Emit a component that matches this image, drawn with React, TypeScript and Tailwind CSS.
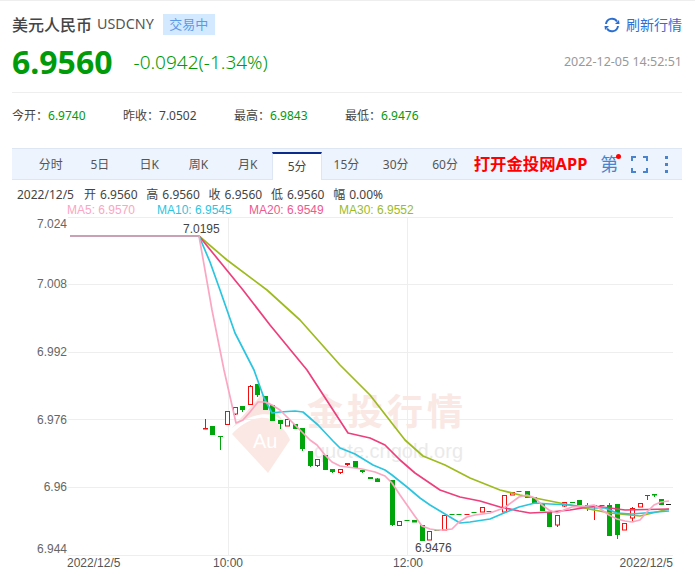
import React from "react";

const GREEN = "#00a50b";
const RED = "#f01010";

type C = [number, number, number, number, number, "r" | "g" | "rf" | "gd" | "rd"];
// x, bodyTop, bodyBottom, wickTop, wickBottom, kind
const candles: C[] = [
  [205.5, 428, 429.5, 419, 429, "rf"],
  [212.5, 426, 435, 426, 435, "g"],
  [220.5, 436, 437, 436, 450, "g"],
  [227.5, 411.5, 424.5, 411, 425, "r"],
  [235.5, 407.5, 414, 407, 415, "r"],
  [242.5, 406, 410, 406, 412, "g"],
  [250.5, 386, 404, 385, 405, "r"],
  [257.5, 384, 395, 384, 397, "g"],
  [265.5, 396, 410, 396, 410, "g"],
  [272.5, 405, 421, 405, 421, "g"],
  [280.5, 420, 424, 420, 429, "g"],
  [287.5, 419.5, 426, 419, 426, "r"],
  [295.5, 424, 429, 424, 429, "g"],
  [302.5, 428, 449, 428, 451, "g"],
  [310.5, 451, 466, 451, 467, "g"],
  [317.5, 459.5, 465.5, 459, 467, "r"],
  [325.5, 455, 470, 455, 470, "g"],
  [332.5, 469, 472, 469, 473, "g"],
  [340.5, 469.5, 472.5, 469, 474, "r"],
  [347.5, 463, 465, 463, 466, "rf"],
  [355, 461, 468, 461, 468, "g"],
  [362.5, 470, 472, 470, 473, "g"],
  [370, 477, 479, 477, 479, "g"],
  [377.5, 478.5, 482, 478, 482, "g"],
  [392, 480, 525, 480, 526, "g"],
  [399.5, 521.5, 525.5, 521, 525, "r"],
  [407, 520.5, 521, 520, 521, "gd"],
  [414.5, 520, 522.5, 520, 522, "g"],
  [422, 525, 541, 525, 541, "g"],
  [429.5, 531.5, 540, 531, 540, "r"],
  [437, 530, 530, 530, 530, "gd"],
  [444.5, 515.5, 530, 515, 530, "r"],
  [452, 514, 514, 514, 514, "gd"],
  [459, 514, 514, 514, 514, "gd"],
  [467, 514, 514, 514, 514, "rd"],
  [474, 512, 512, 512, 512, "gd"],
  [482, 507.5, 512, 507, 512, "r"],
  [489, 511, 511, 511, 511, "gd"],
  [504, 495.5, 512, 495, 512, "r"],
  [512, 492.5, 495, 492, 495, "r"],
  [519, 491, 491, 491, 491, "gd"],
  [527, 491, 498, 491, 498, "g"],
  [534.5, 497, 503, 497, 503, "g"],
  [542, 503.5, 511, 503, 511, "g"],
  [549, 512, 527, 512, 527, "g"],
  [557, 515.5, 525, 515, 527, "r"],
  [564.5, 502.5, 506, 502, 507, "r"],
  [572, 502, 503, 502, 503, "g"],
  [579, 500, 505, 500, 505, "g"],
  [587, 505, 506, 503, 511, "g"],
  [594.5, 505, 506, 505, 520, "rf"],
  [602, 505, 505, 505, 505, "gd"],
  [609.5, 505, 536, 503, 536, "g"],
  [617, 504, 535, 504, 539, "g"],
  [624.5, 523.5, 530, 523, 530, "r"],
  [632, 508.5, 518, 507, 521, "r"],
  [640, 503.5, 507, 503, 507, "r"],
  [647, 495, 496, 495, 500, "rf"],
  [654.5, 494, 495.5, 494, 497, "g"],
  [661.5, 499, 505, 499, 505, "g"],
];

const ma5 = "199,236 212,310 224,370 236,423 243,420 250,412 258,402 265,402 272,405 280,410 287,417 295,425 302,432 310,440 317,445 325,455 332,462 340,466 347,467 355,468 362,469 375,472 385,476 392,483 400,495 407,505 414,515 422,526 430,529 437,530 444,530 452,529 459,522 467,517 475,515 490,513 504,508 519,497 527,495 535,498 542,505 549,510 557,513 564,510 572,507 587,506 594,505 602,510 609,515 617,519 625,521 632,522 640,520 647,512 654,505 661,502 669,501";
const ma10 = "199,236 210,262 220,290 235,333 254,370 264,398 272,413 280,412 295,411 303,412 318,425 333,441 340,448 355,454 373,465 385,470 392,475 407,487 420,498 430,505 440,511 460,523 470,522 490,519 504,513 519,507 535,503 550,504 570,505 594,508 605,508 617,513 632,514 669,511";
const ma20 = "199,236 243,290 270,325 307,370 348,433 370,438 385,445 400,460 415,473 440,490 460,497 480,501 500,507 519,511 530,513 550,512 570,510 594,506 610,508 625,510 669,509";
const ma30 = "199,236 227,260 267,290 300,320 340,365 370,395 405,440 423,456 445,465 470,478 500,490 520,495 540,499 570,505 594,510 610,513 640,516 669,509";

function Chart() {
  return (
    <svg width="695" height="353" viewBox="0 217 695 353" className="block" fontFamily="'Liberation Sans', Arial, sans-serif" fontSize="12">
      {/* grid */}
      {[217.5, 284.5, 352.5, 419.5, 487.5, 555.5].map((y) => (
        <line key={y} x1="68" x2="673" y1={y} y2={y} stroke="#eeeeee" />
      ))}
      <line x1="228.5" x2="228.5" y1="217" y2="555" stroke="#eeeeee" />
      <line x1="407.5" x2="407.5" y1="217" y2="555" stroke="#eeeeee" />

      {/* watermark */}
      <g>
        <path d="M232 434 C245 420 262 414 272 420 C282 426 288 434 290 440 L268 473 Z" fill="#fbe8e4" />
        <path d="M232 428 L263 393 L288 428 C280 414 262 406 232 428 Z" fill="#fae4df" />
        <text x="253" y="448" fontSize="20" fill="#ffffff">Au</text>
        <text x="307" y="425" fontSize="36" letterSpacing="4" fontWeight="700" fill="#f9e8e4" fontFamily="'Noto Sans CJK SC', sans-serif">金投行情</text>
        <text x="314" y="458" fontSize="20" fill="#eaeaea">quote.cngold.org</text>
      </g>

      {/* flat */}
      <line x1="70" x2="199" y1="236" y2="236" stroke="#c9a0b4" strokeWidth="2" />

      {/* candles */}
      {candles.map(([x, t, b, wt, wb, k], i) => {
        const isRed = k === "r" || k === "rf" || k === "rd";
        const col = isRed ? RED : GREEN;
        if (k === "gd" || k === "rd") {
          return <line key={i} x1={x - 2.5} x2={x + 2.5} y1={Math.floor(t) + 0.5} y2={Math.floor(t) + 0.5} stroke={col} />;
        }
        return (
          <g key={i}>
            <line x1={Math.floor(x) + 0.5} x2={Math.floor(x) + 0.5} y1={wt} y2={wb} stroke={col} />
            {k === "r" ? (
              <rect x={Math.floor(x) - 2 + 0.5} y={Math.floor(t) + 0.5} width="4" height={Math.max(b - t, 1)} fill="#ffffff" stroke={col} />
            ) : (
              <rect x={Math.floor(x) - 2} y={t} width="5" height={Math.max(b - t, 1)} fill={col} />
            )}
          </g>
        );
      })}

      {/* MAs */}
      <polyline points={ma30} fill="none" stroke="#9dbb1f" strokeWidth="1.7" strokeLinejoin="round" />
      <polyline points={ma20} fill="none" stroke="#ee3f7d" strokeWidth="1.7" strokeLinejoin="round" />
      <polyline points={ma10} fill="none" stroke="#2cc5df" strokeWidth="1.7" strokeLinejoin="round" />
      <polyline points={ma5} fill="none" stroke="#fba6c2" strokeWidth="1.7" strokeLinejoin="round" />

      <line x1="666" x2="671" y1="504.5" y2="504.5" stroke="#222" />

      {/* axis labels */}
      <g fill="#666666" textAnchor="end">
        <text x="67" y="228">7.024</text>
        <text x="67" y="288">7.008</text>
        <text x="67" y="356">6.992</text>
        <text x="67" y="424">6.976</text>
        <text x="67" y="491">6.96</text>
        <text x="67" y="553">6.944</text>
      </g>
      <g fill="#444444">
        <text x="183" y="233">7.0195</text>
        <text x="415" y="552">6.9476</text>
      </g>
      <g fill="#555555">
        <text x="67" y="567">2022/12/5</text>
        <text x="228" y="567" textAnchor="middle">10:00</text>
        <text x="408" y="567" textAnchor="middle">12:00</text>
        <text x="673" y="567" textAnchor="end">2022/12/5</text>
      </g>
    </svg>
  );
}

const tabs = ["分时", "5日", "日K", "周K", "月K", "5分", "15分", "30分", "60分"];
const ohlc = [
  ["开", "6.9560"],
  ["高", "6.9560"],
  ["收", "6.9560"],
  ["低", "6.9560"],
  ["幅", "0.00%"],
];

export default function App() {
  return (
    <div className="w-[695px] h-[570px] overflow-hidden bg-white border-t border-[#eeeeee] font-['Noto_Sans','Noto_Sans_CJK_SC',sans-serif] text-[#333333]">
      <div className="mx-3 w-[670px]">
        {/* Title row */}
        <div className="flex items-center h-[21px] mt-[13px]">
          <span className="text-base font-medium text-[#444444] leading-none">美元人民币</span>
          <span className="ml-[5px] text-[14.3px] text-[#555555] leading-none">USDCNY</span>
          <span className="ml-[9px] w-[52px] h-[21px] flex items-center justify-center bg-[#d3e9ff] text-[13px] text-[#5a9be8] leading-none">交易中</span>
          <span className="ml-auto flex items-center gap-[6px] text-sm text-[#2f6fd6] leading-none">
            <svg width="16" height="16" viewBox="0 0 16 16" fill="none">
              <path d="M2 7 A6 6 0 0 1 13 4.5" stroke="#2a6fd0" strokeWidth="2" />
              <path d="M14 9 A6 6 0 0 1 3 11.5" stroke="#2a6fd0" strokeWidth="2" />
              <path d="M15.5 7 L11 7 L15 3 Z" fill="#2a6fd0" />
              <path d="M0.5 9 L5 9 L1 13 Z" fill="#2a6fd0" />
            </svg>
            刷新行情
          </span>
        </div>
        {/* Price row */}
        <div className="flex items-center h-[44px] mt-[5px]">
          <span className="text-[32px] font-bold text-[#009a0a] leading-none">6.9560</span>
          <span className="ml-[21px] text-[19px] font-light text-[#009a0a] leading-none">-0.0942(-1.34%)</span>
          <span className="ml-auto text-[12.5px] text-[#999999] leading-none">2022-12-05 14:52:51</span>
        </div>
        <div className="h-px bg-[#eeeeee] mt-[8px]" />
        {/* stats */}
        <div className="flex items-center h-[45px] text-xs text-[#444444]">
          {[
            ["今开：", "6.9740", "text-[#009a0a]"],
            ["昨收：", "7.0502", "text-[#444444]"],
            ["最高：", "6.9843", "text-[#009a0a]"],
            ["最低：", "6.9476", "text-[#009a0a]"],
          ].map(([l, v, c]) => (
            <div key={l} className="w-[111px] whitespace-nowrap">
              {l}
              <span className={c}>{v}</span>
            </div>
          ))}
        </div>
      </div>

      {/* tabs */}
      <div className="ml-3 w-[670px] h-[32px] mt-[10px] bg-[#edf4fd] border-y border-[#dde6f3] flex items-end pl-[14px] relative">
        {tabs.map((t, i) => (
          <div
            key={t}
            className={
              i === 5
                ? "w-[49.3px] h-[28px] -mb-px flex items-center justify-center bg-white border-t-2 border-x border-t-[#0c2c8c] border-x-[#dde6f3] text-xs text-[#444444] leading-none"
                : "w-[49.3px] h-[28px] flex items-center justify-center text-xs text-[#555555] leading-none"
            }
          >
            {t}
          </div>
        ))}
        <div className="ml-[4px] self-center text-[16.4px] font-bold text-[#ff0000] leading-none whitespace-nowrap">打开金投网APP</div>
        <div className="ml-[13px] self-center relative text-lg text-[#4a83cd] leading-none">
          第
          <span className="absolute -top-[1px] -right-[3px] w-[5px] h-[5px] rounded-full bg-[#ff0000]" />
        </div>
        <svg className="ml-[13px] self-center" width="17" height="17" viewBox="0 0 17 17" fill="none" stroke="#4a83cd" strokeWidth="2">
          <path d="M1 5V1H5M12 1H16V5M16 12V16H12M5 16H1V12" />
        </svg>
        <div className="ml-[17px] self-center flex flex-col gap-[4px]">
          <span className="w-[3px] h-[3px] bg-[#4a83cd]" />
          <span className="w-[3px] h-[3px] bg-[#4a83cd]" />
          <span className="w-[3px] h-[3px] bg-[#4a83cd]" />
        </div>
      </div>

      {/* OHLC */}
      <div className="flex h-[14px] mt-[8px] pl-[17px] text-xs leading-[14px] text-[#444444] whitespace-nowrap">
        <span className="w-[67px]">2022/12/5</span>
        {ohlc.map(([k, v]) => (
          <span key={k} className="w-[62.3px] flex gap-[4px]">
            <span>{k}</span>
            <span>{v}</span>
          </span>
        ))}
      </div>
      <div className="flex h-[14px] mt-px pl-[67px] text-xs leading-[14px] font-['Liberation_Sans',sans-serif] whitespace-nowrap">
        <span className="w-[90px] text-[#fba6c2]">MA5: 6.9570</span>
        <span className="w-[92px] text-[#2cc5df]">MA10: 6.9545</span>
        <span className="w-[90px] text-[#ee5a8c]">MA20: 6.9549</span>
        <span className="text-[#9dbb1f]">MA30: 6.9552</span>
      </div>
      <Chart />
    </div>
  );
}
